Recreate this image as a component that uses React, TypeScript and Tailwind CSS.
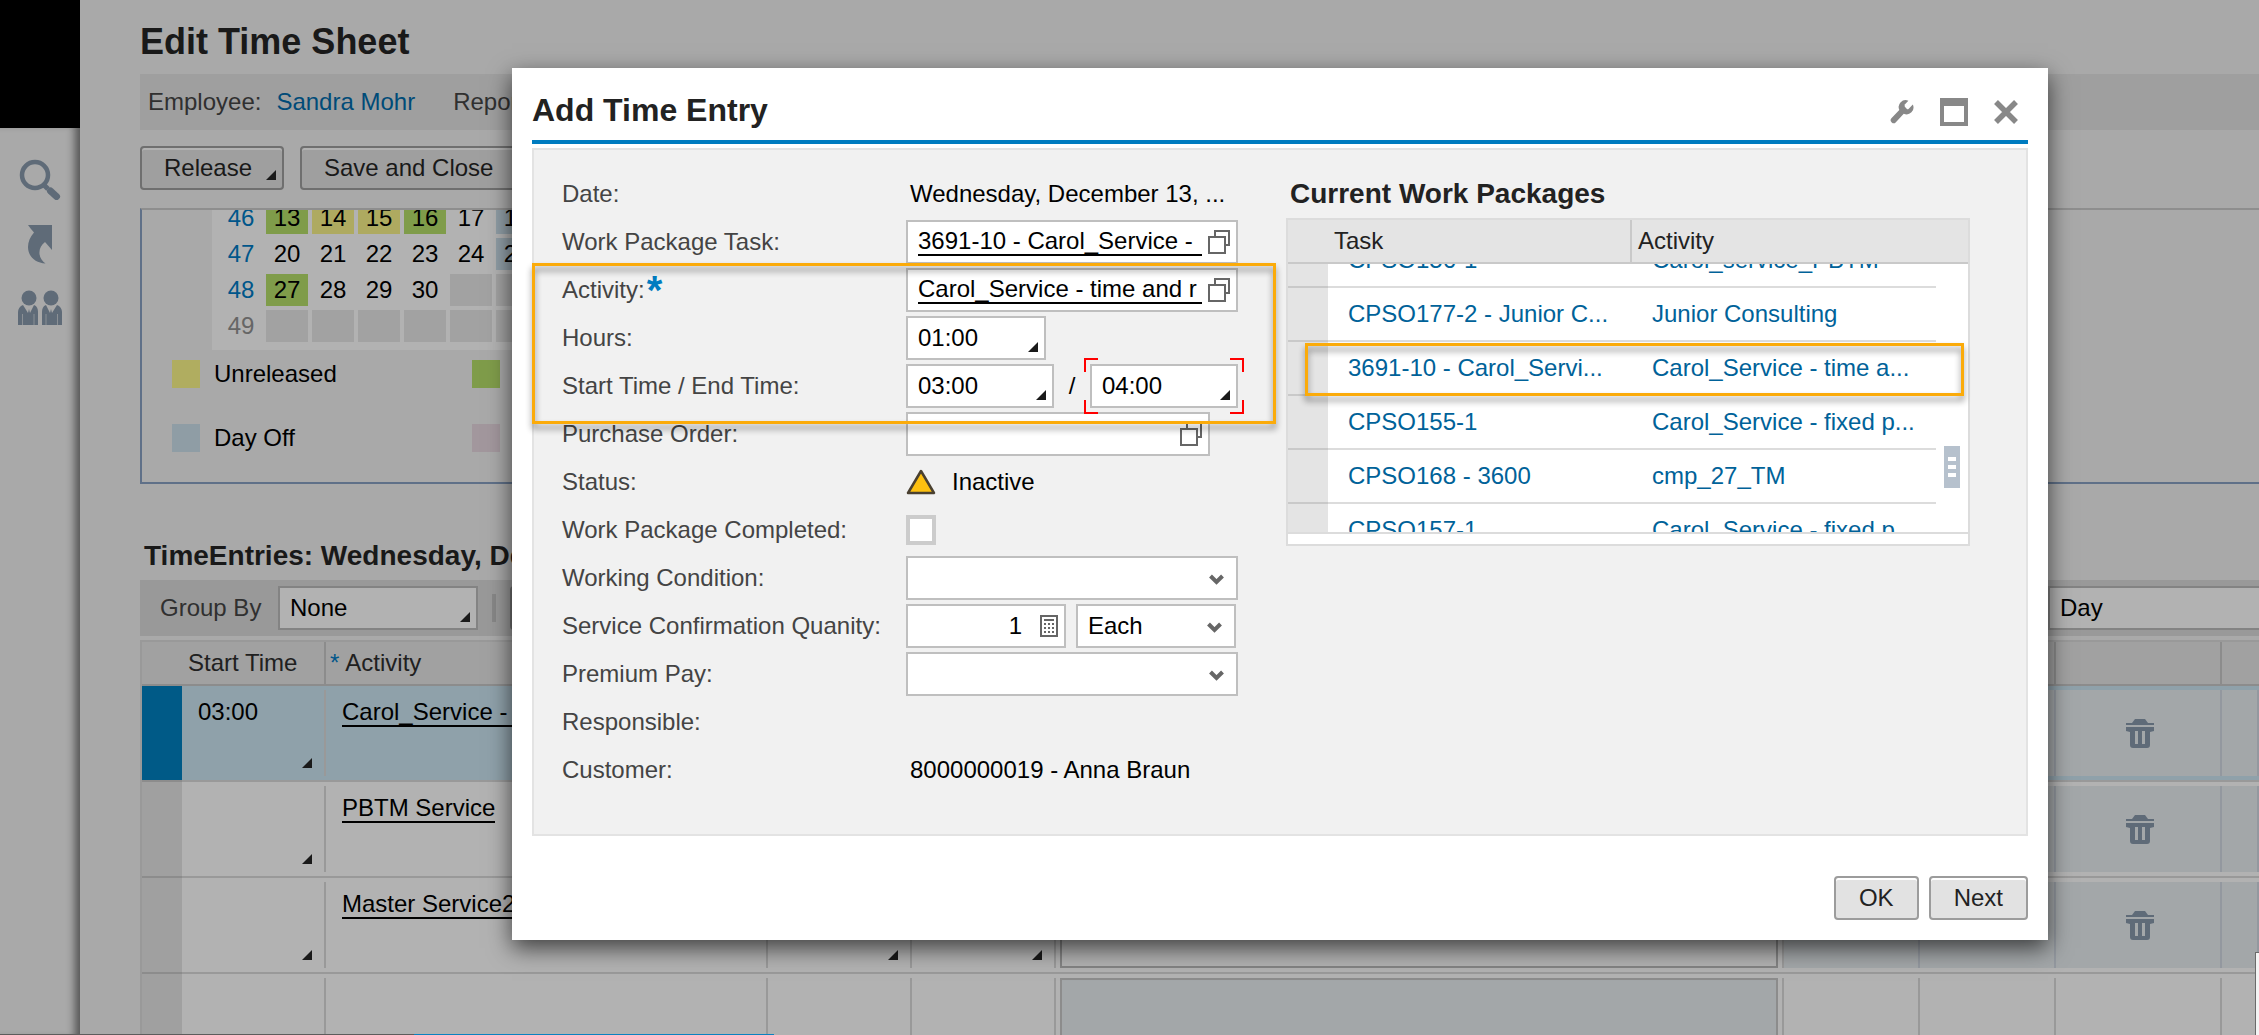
import { ReactNode } from "react";
import { clsx } from "clsx";

const weeks = [
  { week: "46", days: ["13", "14", "15", "16", "17", "18"], tones: ["green", "yellow", "yellow", "green", "", "off"] },
  { week: "47", days: ["20", "21", "22", "23", "24", "25"], tones: ["", "", "", "", "", "off"] },
  { week: "48", days: ["27", "28", "29", "30", "", ""], tones: ["green", "", "", "", "none", "none"] },
  { week: "49", days: ["", "", "", "", "", ""], tones: ["none", "none", "none", "none", "none", "none"] }
];

const dayTones: Record<string, string> = {
  green: "bg-[#7f9c4a]",
  yellow: "bg-[#aeaa60]",
  off: "bg-[#8f9da5]",
  none: "bg-[#a2a2a2]"
};

const entries = [
  { start: "03:00", activity: "Carol_Service - time and r", selected: true },
  { start: "", activity: "PBTM Service", selected: false },
  { start: "", activity: "Master Service2", selected: false }
];

const workPackages = [
  ["CPSO156-1", "Carol_service_PBTM"],
  ["CPSO177-2 - Junior C...", "Junior Consulting"],
  ["3691-10 - Carol_Servi...", "Carol_Service - time a..."],
  ["CPSO155-1", "Carol_Service - fixed p..."],
  ["CPSO168 - 3600", "cmp_27_TM"],
  ["CPSO157-1", "Carol_Service - fixed p..."]
];

export default function App() {
  return (
    <div className="relative flex h-screen overflow-hidden bg-[#a9a9a9] font-['Liberation_Sans',Arial,sans-serif] text-[24px] leading-7 text-black">
      <Sidebar />
      <TimeSheetPage />
      <div className="absolute inset-0 flex items-start pt-[68px] pr-[211px] pl-[512px]">
        <TimeEntryDialog />
      </div>
      <div className="absolute right-0 bottom-0 h-[83px] w-1 border-t border-l border-[#6b6b6b] bg-[#f4f4f4]" />
      <div className="absolute bottom-0 left-0 flex h-px w-[774px]">
        <div className="w-[414px] bg-[#5c5c5c]" />
        <div className="flex-1 bg-[#0a82c0]" />
      </div>
    </div>
  );
}

function Sidebar() {
  return (
    <aside className="relative flex w-20 shrink-0 flex-col text-[#5f6b78]">
      <div className="z-10 h-32 bg-black" />
      <nav className="flex flex-1 flex-col items-center gap-[25px] bg-[#a9a9a9] pt-[30px] shadow-[inset_-10px_0_8px_-5px_rgba(0,0,0,0.5)]">
        <button aria-label="Search" type="button">
          <svg className="h-[42px] w-[42px]" viewBox="0 0 42 42" fill="none" stroke="currentColor">
            <circle cx="16" cy="17" r="13" strokeWidth="4.500" />
            <path d="M25 27l4 4" strokeWidth="5" />
            <path d="M31.500 33l6 5.500" strokeWidth="7" strokeLinecap="round" />
          </svg>
        </button>
        <button aria-label="Shortcuts" type="button">
          <svg className="h-[40px] w-[28px]" viewBox="0 0 28 40" fill="currentColor">
            <path d="M2 0h24v25l-7-8c-4 3-6 7-5.500 12 .5 4 3 7.500 6 9.500C9 38 2 31 2 22c0-5 2-10 6-14.500C6 5 4 3 2 0z" />
          </svg>
        </button>
        <button aria-label="People" type="button">
          <svg className="h-[36px] w-[44px]" viewBox="0 0 44 36" fill="currentColor">
            <circle cx="11" cy="8" r="7.500" />
            <circle cx="33" cy="8" r="7.500" />
            <path d="M0 35V22c0-3 2-6 5-7l5 8 1-4 1 4 4-8c3 1 4 4 4 7v13z" />
            <path d="M24 35V22c0-3 1-6 4-7l4 8 1-4 1 4 5-8c3 1 5 4 5 7v13z" />
            <path d="M4.500 35V24M16 35V24M28 35V24M39.500 35V24" stroke="#a9a9a9" strokeWidth="0.600" />
          </svg>
        </button>
      </nav>
    </aside>
  );
}

function TimeSheetPage() {
  return (
    <main className="min-w-0 flex-1 pt-5 pl-[60px]">
      <h1 className="text-[36px] leading-[44px] font-bold text-[#191919]">Edit Time Sheet</h1>
      <div className="mt-[10px] flex h-14 items-center bg-[#9f9f9f] pl-2 text-[#303030]">
        <span>Employee:</span>
        <a className="ml-[15px] text-[#004b78]" href="#employee">Sandra Mohr</a>
        <span className="ml-[38px]">Reporting Period:</span>
      </div>
      <div className="mt-4 flex gap-4">
        <button className="relative h-11 w-36 rounded-sm border-2 border-[#6f6f6f] bg-[#9f9f9f] pl-[22px] text-left text-[#191919] shadow-[inset_0_2px_0_#b2b2b2]" type="button">
          Release
          <Corner className="right-1.5 bottom-2" />
        </button>
        <button className="h-11 rounded-sm border-2 border-[#6f6f6f] bg-[#9f9f9f] px-[22px] text-[#191919] shadow-[inset_0_2px_0_#b2b2b2]" type="button">
          Save and Close
        </button>
      </div>
      <CalendarPanel />
      <h2 className="mt-14 pl-1 text-[28px] leading-8 font-bold text-[#191919]">
        TimeEntries: Wednesday, December 13
      </h2>
      <EntriesToolbar />
      <EntriesTable />
    </main>
  );
}

function CalendarPanel() {
  return (
    <section className="mt-[18px] h-[276px] overflow-hidden border-t-2 border-b-2 border-l-2 border-t-[#8e8e8e] border-b-[#5f7088] border-l-[#5f7088]">
      <div className="ml-[70px] w-[346px] bg-[#b2b2b2] pb-1">
        <table className="-mt-3 table-fixed border-separate border-spacing-1 text-center">
          <tbody>
            {weeks.map(({ week, days, tones }) => (
              <tr key={week}>
                <th className={clsx("h-8 w-[46px] p-0 pl-1 font-normal", week === "49" ? "text-[#666666]" : "text-[#00568a]")} scope="row">
                  {week}
                </th>
                {days.map((day, index) => (
                  <td className={clsx("h-8 w-[42px] p-0", dayTones[tones[index]])} key={index}>
                    {day}
                  </td>
                ))}
              </tr>
            ))}
          </tbody>
        </table>
      </div>
      <div className="mt-[10px] ml-[30px] grid grid-cols-[300px_300px] gap-y-9">
        <Legend tone="bg-[#b0ad60]" label="Unreleased" />
        <Legend tone="bg-[#7f9c4a]" />
        <Legend tone="bg-[#8f9da5]" label="Day Off" />
        <Legend tone="bg-[#a2979d]" />
      </div>
    </section>
  );
}

function Legend({ tone, label }: { tone: string; label?: string }) {
  return (
    <div className="flex items-center gap-[14px]">
      <span className={clsx("h-7 w-7", tone)} />
      {label}
    </div>
  );
}

function EntriesToolbar() {
  return (
    <div className="mt-2 flex h-14 items-center bg-[#999999] pl-5">
      <label className="w-[118px] text-[#303030]" htmlFor="group-by">Group By</label>
      <div className="relative w-[200px]">
        <select className="h-11 w-full appearance-none border-2 border-[#838383] bg-[#b2b2b2] pl-[10px]" id="group-by">
          <option>None</option>
        </select>
        <Corner className="right-2 bottom-2" />
      </div>
      <span className="ml-[14px] h-7 w-1 bg-[#878787]" />
      <button aria-label="Add Row" className="ml-[14px] h-11 w-24 rounded-sm border-2 border-[#6f6f6f] bg-[#9f9f9f]" type="button" />
      <select aria-label="View" className="ml-auto h-11 w-[211px] appearance-none border-2 border-r-0 border-[#838383] bg-[#b2b2b2] pl-[10px]">
        <option>Day</option>
      </select>
    </div>
  );
}

function EntriesTable() {
  return (
    <table className="mt-1 w-full table-fixed border-separate border-spacing-0 border-t-2 border-l-2 border-[#999999] text-left">
      <colgroup>
        <col className="w-10" />
        <col className="w-36" />
        <col className="w-[442px]" />
        <col className="w-36" />
        <col className="w-36" />
        <col className="w-[728px]" />
        <col className="w-[136px]" />
        <col className="w-[136px]" />
        <col className="w-[166px]" />
        <col />
      </colgroup>
      <thead className="bg-[#a1a1a1] text-[#202020]">
        <tr>
          <HeadCell plain />
          <HeadCell><span className="pl-1.5">Start Time</span></HeadCell>
          <HeadCell>
            <span className="pl-1 text-[#00568a]">*</span>
            <span className="pl-1.5">Activity</span>
          </HeadCell>
          <HeadCell />
          <HeadCell />
          <HeadCell />
          <HeadCell />
          <HeadCell />
          <HeadCell />
          <HeadCell plain />
        </tr>
      </thead>
      <tbody>
        {entries.map(({ start, activity, selected }) => (
          <tr className={selected ? "bg-[#8fa1aa]" : "bg-[#b2b2b2]"} key={activity}>
            <td className={clsx("border-b-2 border-[#8c8c8c] p-0", selected ? "bg-[#005a87]" : "bg-[#a0a0a0]")} />
            <BodyCell>
              <span className="block pt-2 pl-4">{start}</span>
              <Corner className="right-3 bottom-2" />
            </BodyCell>
            <BodyCell>
              <div className="overflow-hidden pt-2 pl-4 whitespace-nowrap">
                <a className="inline-block border-b-2 border-black leading-[26px]" href="#activity">{activity}</a>
              </div>
            </BodyCell>
            <BodyCell><Corner className="right-3 bottom-2" /></BodyCell>
            <BodyCell><Corner className="right-3 bottom-2" /></BodyCell>
            <BodyCell>
              <textarea aria-label="Description" className="mx-1 block h-full w-[718px] resize-none border-2 border-[#838383] bg-[#b2b2b2]" />
            </BodyCell>
            <BodyCell filled />
            <BodyCell filled />
            <BodyCell filled>
              <button aria-label="Delete" className="flex h-full w-full items-center justify-center pt-0.5 pl-1" type="button">
                <TrashIcon />
              </button>
            </BodyCell>
            <BodyCell filled />
          </tr>
        ))}
        <tr className="bg-[#b2b2b2]">
          <td className="border-b-2 border-[#8c8c8c] bg-[#a0a0a0] p-0" />
          <BodyCell />
          <BodyCell />
          <BodyCell />
          <BodyCell />
          <BodyCell>
            <textarea aria-label="Description" className="mx-1 block h-full w-[718px] resize-none border-2 border-[#8c8c8c] bg-[#a3a7a9]" disabled />
          </BodyCell>
          <BodyCell />
          <BodyCell />
          <BodyCell />
          <td className="border-b-2 border-[#8c8c8c] p-0" />
        </tr>
      </tbody>
    </table>
  );
}

function HeadCell({ children, plain = false }: { children?: ReactNode; plain?: boolean }) {
  return (
    <th className={clsx("h-11 border-b-2 border-[#8c8c8c] p-0 font-normal", !plain && "border-r-2")}>
      {children}
    </th>
  );
}

function BodyCell({ children, filled = false }: { children?: ReactNode; filled?: boolean }) {
  return (
    <td className="h-24 border-b-2 border-[#999999] p-0">
      <div className={clsx("relative my-1 h-[86px] border-r-2", filled ? "border-[#93989f] bg-[#a3a7a9]" : "border-[#999999]")}>
        {children}
      </div>
    </td>
  );
}

function TimeEntryDialog() {
  return (
    <div aria-label="Add Time Entry" className="min-w-0 flex-1 bg-white px-5 pb-5 shadow-[0_8px_22px_rgba(0,0,0,0.65)]" role="dialog">
      <header className="flex h-[76px] items-center border-b-4 border-[#007cc0] pt-3">
        <h2 className="text-[32px] leading-9 font-bold text-[#222222]">Add Time Entry</h2>
        <div className="mt-1 mr-[10px] ml-auto flex items-center gap-[26px] text-[#888888]">
          <button aria-label="Settings" type="button">
            <svg className="h-6 w-6" viewBox="2 1.500 20 21" fill="currentColor">
              <path d="M14.700 6.300a1 1 0 0 0 0 1.400l1.600 1.600a1 1 0 0 0 1.400 0l3.770-3.770a6 6 0 0 1-7.940 7.940l-6.910 7.400a2.500 2.500 0 0 1-3.900-3.300l6.910-7.400a6 6 0 0 1 7.940-7.940l-3.760 3.760z" />
            </svg>
          </button>
          <button aria-label="Maximize" className="h-7 w-7 border-4 border-t-8 border-[#888888]" type="button" />
          <button aria-label="Close" type="button">
            <svg className="h-6 w-6" viewBox="0 0 24 24" stroke="currentColor" strokeWidth="5.500">
              <path d="M2 2l20 20M22 2L2 22" />
            </svg>
          </button>
        </div>
      </header>
      <div className="relative mt-1 flex gap-12 border-2 border-[#e3e3e3] bg-[#f1f1f1] pt-[22px] pr-14 pb-[42px] pl-7">
        <EntryForm />
        <WorkPackages />
        <div className="pointer-events-none absolute top-[113px] -left-0.5 h-[161px] w-[744px] border-3 border-[#fbab0a] drop-shadow-[0_5px_3px_rgba(0,0,0,0.45)]" />
      </div>
      <footer className="mt-10 flex justify-end gap-[10px]">
        <DialogButton>OK</DialogButton>
        <DialogButton>Next</DialogButton>
      </footer>
    </div>
  );
}

function DialogButton({ children }: { children: ReactNode }) {
  return (
    <button className="h-11 rounded-sm border-2 border-[#9c9c9c] bg-[#e2e2e2] px-[23px] text-[#222222] shadow-[inset_0_2px_0_#ffffff]" type="button">
      {children}
    </button>
  );
}

function EntryForm() {
  return (
    <form className="grid w-[676px] shrink-0 auto-rows-[44px] grid-cols-[344px_minmax(0,1fr)] items-center gap-y-1">
      <Label>Date:</Label>
      <span className="pl-1">Wednesday, December 13, ...</span>

      <Label htmlFor="task">Work Package Task:</Label>
      <ValueHelp id="task" value="3691-10 - Carol_Service - " />

      <Label htmlFor="activity">
        Activity:
        <span className="text-[40px] font-bold text-[#007cc0]">*</span>
      </Label>
      <ValueHelp id="activity" value="Carol_Service - time and r" />

      <Label htmlFor="hours">Hours:</Label>
      <div className="relative w-[140px]">
        <TimeInput id="hours" label="Hours" value="01:00" />
      </div>

      <Label htmlFor="start-time">Start Time / End Time:</Label>
      <div className="flex items-center justify-between">
        <div className="relative w-[148px]">
          <TimeInput id="start-time" label="Start Time" value="03:00" />
        </div>
        /
        <div className="relative w-[148px]">
          <TimeInput id="end-time" label="End Time" value="04:00" />
          <span className="absolute -top-1.5 -left-1.5 h-[14px] w-[14px] border-t-2 border-l-2 border-[#ff0000]" />
          <span className="absolute -top-1.5 -right-1.5 h-[14px] w-[14px] border-t-2 border-r-2 border-[#ff0000]" />
          <span className="absolute -bottom-1.5 -left-1.5 h-[14px] w-[14px] border-b-2 border-l-2 border-[#ff0000]" />
          <span className="absolute -right-1.5 -bottom-1.5 h-[14px] w-[14px] border-r-2 border-b-2 border-[#ff0000]" />
        </div>
      </div>

      <Label htmlFor="purchase-order">Purchase Order:</Label>
      <div className="flex h-11 w-[304px] items-center border-2 border-[#bfbfbf] bg-white pr-1.5 pl-[10px]">
        <input className="min-w-0 flex-1 outline-none" id="purchase-order" />
        <CopyIcon />
      </div>

      <Label>Status:</Label>
      <div className="flex items-center gap-4">
        <svg className="h-[26px] w-[30px]" viewBox="0 0 30 26">
          <path d="M15 2L28 24H2z" fill="#fdc010" stroke="#4a4030" strokeWidth="2.500" strokeLinejoin="round" />
        </svg>
        Inactive
      </div>

      <Label htmlFor="completed">Work Package Completed:</Label>
      <input className="h-[30px] w-[30px] appearance-none border-4 border-[#cccccc] bg-white" id="completed" type="checkbox" />

      <Label htmlFor="working-condition">Working Condition:</Label>
      <Dropdown id="working-condition" />

      <Label htmlFor="quantity">Service Confirmation Quanity:</Label>
      <div className="flex gap-[10px]">
        <div className="flex h-11 w-40 items-center gap-[18px] border-2 border-[#bfbfbf] bg-white pr-1.5">
          <input className="min-w-0 flex-1 text-right outline-none" defaultValue="1" id="quantity" />
          <CalculatorIcon />
        </div>
        <div className="w-40">
          <Dropdown id="unit" label="Unit" value="Each" />
        </div>
      </div>

      <Label htmlFor="premium-pay">Premium Pay:</Label>
      <Dropdown id="premium-pay" />

      <Label>Responsible:</Label>
      <span />

      <Label>Customer:</Label>
      <span className="pl-1">8000000019 - Anna Braun</span>
    </form>
  );
}

function Label({ children, htmlFor }: { children: ReactNode; htmlFor?: string }) {
  const className = "flex items-center gap-0.5 whitespace-nowrap text-[#444444]";
  return htmlFor ? (
    <label className={className} htmlFor={htmlFor}>{children}</label>
  ) : (
    <span className={className}>{children}</span>
  );
}

function ValueHelp({ id, value }: { id: string; value: string }) {
  return (
    <div className="flex h-11 items-center gap-1.5 border-2 border-[#bfbfbf] bg-white pr-1.5 pl-[10px]">
      <input className="h-7 min-w-0 flex-1 border-b-2 border-black outline-none" defaultValue={value} id={id} />
      <CopyIcon />
    </div>
  );
}

function TimeInput({ id, label, value }: { id: string; label: string; value: string }) {
  return (
    <>
      <input aria-label={label} className="block h-11 w-full border-2 border-[#bfbfbf] bg-white pl-[10px] outline-none" defaultValue={value} id={id} />
      <Corner className="right-2 bottom-2" />
    </>
  );
}

function Dropdown({ id, label, value = "" }: { id: string; label?: string; value?: string }) {
  return (
    <div className="relative">
      <select aria-label={label} className="block h-11 w-full appearance-none border-2 border-[#bfbfbf] bg-white pl-[10px]" id={id}>
        <option>{value}</option>
      </select>
      <svg className="pointer-events-none absolute top-[18px] right-[14px] h-[11px] w-[15px]" viewBox="0 0 15 11" fill="none" stroke="#666666" strokeWidth="4">
        <path d="M1.500 2l6 6 6-6" />
      </svg>
    </div>
  );
}

function WorkPackages() {
  return (
    <section className="min-w-0 flex-1">
      <h3 className="mb-0.5 flex h-11 items-center pl-1 text-[28px] leading-8 font-bold text-[#222222]">
        Current Work Packages
      </h3>
      <div className="relative border-2 border-[#dcdcdc] bg-white pb-[10px]">
        <table className="w-full table-fixed border-separate border-spacing-0 bg-[#e4e4e4] text-left text-[#222222]">
          <thead>
            <tr>
              <th className="h-11 w-10 border-b-2 border-[#c9c9c9] p-0" />
              <th className="w-[304px] border-r-2 border-b-2 border-[#c9c9c9] p-0 pl-1.5 font-normal">Task</th>
              <th className="border-b-2 border-[#c9c9c9] p-0 pl-1.5 font-normal">Activity</th>
            </tr>
          </thead>
        </table>
        <div className="flex h-[270px] overflow-hidden border-b-2 border-[#dcdcdc]">
          <table className="-mt-[30px] flex-1 table-fixed border-separate border-spacing-0 self-start text-[#006299]">
            <tbody>
              {workPackages.map(([task, activity]) => (
                <tr key={task}>
                  <td className="h-[54px] w-10 border-b-2 border-[#c9c9c9] bg-[#e4e4e4] p-0" />
                  <td className="w-[304px] border-b-2 border-[#dcdcdc] p-0 pl-5 whitespace-nowrap">
                    <a href="#task">{task}</a>
                  </td>
                  <td className="border-b-2 border-[#dcdcdc] p-0 pl-5 whitespace-nowrap">
                    <a href="#package">{activity}</a>
                  </td>
                </tr>
              ))}
            </tbody>
          </table>
          <div className="w-8 px-2 pt-[182px]">
            <div className="flex h-[42px] flex-col items-center justify-center gap-1 bg-[#b6c1cd]">
              <span className="h-1 w-2 bg-white" />
              <span className="h-1 w-2 bg-white" />
              <span className="h-1 w-2 bg-white" />
            </div>
          </div>
        </div>
        <div className="pointer-events-none absolute top-[123px] left-[17px] h-[53px] w-[659px] border-3 border-[#fbab0a] drop-shadow-[0_5px_3px_rgba(0,0,0,0.45)]" />
      </div>
    </section>
  );
}

function Corner({ className }: { className: string }) {
  return (
    <svg className={clsx("pointer-events-none absolute h-[10px] w-[10px]", className)} viewBox="0 0 10 10" fill="#1a1a1a">
      <path d="M10 0v10H0z" />
    </svg>
  );
}

function CopyIcon() {
  return (
    <svg className="h-6 w-[22px] shrink-0" viewBox="0 0 22 24" fill="none" stroke="#666666" strokeWidth="2">
      <path d="M7 6V1h14v14h-4" />
      <path d="M1 7h16v16H1z" />
    </svg>
  );
}

function CalculatorIcon() {
  return (
    <svg className="h-[22px] w-[18px] shrink-0" viewBox="0 0 18 22" fill="none" stroke="#666666">
      <path d="M1 1h16v20H1z" strokeWidth="2" />
      <path d="M4 5h10" strokeWidth="2" />
      <path d="M4 9h10M4 13h10M4 17h10" strokeWidth="2" strokeDasharray="2 2" />
    </svg>
  );
}

function TrashIcon() {
  return (
    <svg className="h-[30px] w-7" viewBox="0 0 28 30" fill="#5f6b78">
      <path d="M0 4h6l3-4h10l3 4h6v2H0z" />
      <path d="M0 8h28v4l-4 1v13q0 3-3 3H7q-3 0-3-3V13l-4-1z" />
      <path d="M9 12h3v13H9zM16 12h3v13h-3z" fill="#a3a7a9" />
    </svg>
  );
}
